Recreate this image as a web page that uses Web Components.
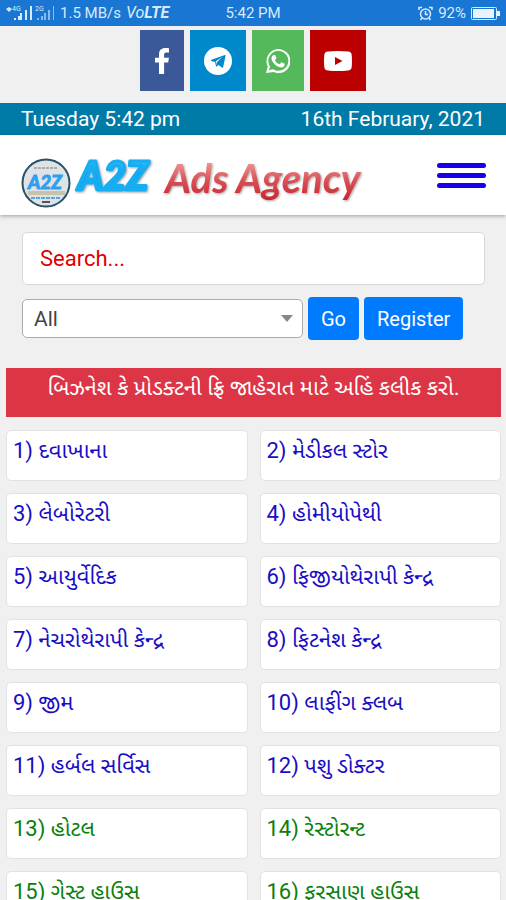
<!DOCTYPE html>
<html lang="gu">
<head>
<meta charset="utf-8">
<meta name="viewport" content="width=device-width, initial-scale=1">
<title>A2Z Ads Agency</title>
<style>
  body { margin: 0; background: #f0f0f0; font-family: Roboto, "Noto Sans Gujarati", "Noto Sans", sans-serif; }
</style>
</head>
<body>
<a2z-app></a2z-app>
<script>
const define = (name, html, setup) => customElements.define(name, class extends HTMLElement {
  connectedCallback() {
    if (this.shadowRoot) return;
    const t = document.createElement('template');
    t.innerHTML = html;
    this.attachShadow({ mode: 'open' }).append(t.content.cloneNode(true));
    if (setup) setup(this, this.shadowRoot);
  }
});

define('status-bar', `
<style>
  :host { display: grid; grid-template-columns: 1fr auto 1fr; align-items: center; height: 26px; padding: 0 6px; background: #1976d2; color: #d8eafc; font-size: 15px; line-height: 26px; }
  .side { display: flex; align-items: center; gap: 5px; }
  .right { justify-content: flex-end; }
  .lte { font-size: 16px; font-style: italic; }
  svg { display: block; flex: none; }
</style>
<div class="side">
  <svg width="49" height="16" viewBox="0 0 49 16" fill="#d8eafc">
    <path d="M0 4l3-2 3 2-3 3z"/>
    <text x="6" y="6" font-size="7">4G</text><text x="29" y="6" font-size="7">2G</text>
    <path d="M8 13h2v2H8zM12 11h2v4h-2zM14 8h2v7h-2zM19 5h2v10h-2zM24 1h2v14h-2z"/>
    <path opacity=".6" d="M31 13h2v2h-2zM35 11h2v4h-2zM38 8h2v7h-2zM42 5h2v10h-2zM47 1h1v14h-1z"/>
  </svg>
  <span>1.5 MB/s</span><span class="lte">Vo<b>LTE</b></span>
</div>
<span>5:42 PM</span>
<div class="side right">
  <svg width="15" height="15" viewBox="0 0 15 15" fill="none" stroke="#d8eafc" stroke-width="1.5"><circle cx="7.500" cy="8" r="5"/><path d="M7.500 5v3.500H10M1 4V1.500h3M14 4V1.500h-3M4 12l-1.500 2M11 12l1.500 2"/></svg>
  <span>92%</span>
  <svg width="29" height="13" viewBox="0 0 29 13"><rect x=".5" y=".5" width="25" height="12" rx="1" fill="none" stroke="#d8eafc"/><path d="M2 2h21v9H2zM26 4h3v5h-3z" fill="#e8f3fd"/></svg>
</div>`);

define('social-link', `
<style>
  :host { display: block; }
  a { display: flex; align-items: center; height: 61px; padding: 0 14px; background: var(--tile); color: #fff; }
  ::slotted(svg) { display: block; }
</style>
<a><slot></slot></a>`, (host, root) => {
  const a = root.querySelector('a');
  a.href = host.getAttribute('href');
  a.setAttribute('aria-label', host.getAttribute('label'));
});

define('social-bar', `
<style>
  :host { display: flex; justify-content: center; gap: 6px; padding: 4px 0 12px; }
</style>
<social-link href="#facebook" label="Facebook" style="--tile:#3b5998"><svg width="16" height="28" viewBox="0 0 16 28" fill="#fff"><path d="M15 1.300v4.200h-2.600c-2 0-2.300 1-2.300 2.300v3h4.800l-.7 4.700h-4.100V27H5V15.500H1v-4.700h4V7.300C5 3.200 7.500 1 11.300 1c1.700 0 3.200.1 3.700.3z"/></svg></social-link>
<social-link href="#telegram" label="Telegram" style="--tile:#0088cc"><svg width="28" height="28" viewBox="0 0 28 28"><circle cx="14" cy="14" r="14" fill="#fff"/><path fill="#0088cc" d="M20.800 8.100c.5-.2.900.1.700.9l-2.300 10.900c-.2.800-.7 1-1.300.6l-3.500-2.600-1.700 1.700c-.3.300-.5.300-.6-.3l-1.300-4.200-3.400-1.100c-.8-.3-.8-.8.200-1.200zM11.600 14.600l.6 3.700.4-2.900 5.500-5.300z"/></svg></social-link>
<social-link href="#whatsapp" label="WhatsApp" style="--tile:#55b95c"><svg width="24" height="26" viewBox="0 0 24 26" fill="#fff"><path fill-rule="evenodd" d="M0 25l1.800-6.400A12 12 0 1 1 7.400 24zM3 22.200l3.800-1 .7.400a10 10 0 1 0-3.800-3.700l.4.700z"/><path d="M8.300 7c.4-.1.800 0 1 .5l1 2.300c.1.300 0 .7-.2 1l-.9 1c-.2.200-.2.400-.1.600 1 1.700 2.300 2.900 4.200 3.700.3.100.5.100.7-.2l1-1.300c.3-.3.5-.3.900-.2l2.300 1.100c.4.200.5.400.5.700-.1 2.200-1.700 3.100-3.300 3.200-2.300 0-5-1.500-6.700-3.200-1.900-1.900-3.200-4.100-3.200-6 0-1.500 1.100-3 2.800-3.200z"/></svg></social-link>
<social-link href="#youtube" label="YouTube" style="--tile:#bb0000"><svg width="28" height="20" viewBox="0 0 28 20"><path fill="#fff" d="M4 .5Q14-.5 24 .5 27.500.8 27.700 4q.5 6 0 12-.3 3.200-3.700 3.500-10 1-20 0Q.600 19.200.300 16q-.6-6 0-12Q.600.800 4 .5z"/><path fill="#b00" d="M11 6l7.500 4-7.500 4z"/></svg></social-link>`);

define('date-bar', `
<style>
  :host { display: flex; justify-content: space-between; height: 32px; padding: 0 21px; background: #007ba7; color: #fff; font-size: 21px; line-height: 32px; }
</style>
<span>Tuesday 5:42 pm</span><span>16th February, 2021</span>`);

define('site-header', `
<style>
  :host { display: flex; align-items: center; justify-content: space-between; height: 80px; padding: 0 20px 0 21px; background: #fff; box-shadow: 0 1px 4px rgba(0,0,0,.35); }
  a, svg { display: block; }
  a { padding-top: 16px; }
  svg { overflow: visible; }
  text { font-style: italic; font-weight: 700; }
  button { display: flex; flex-direction: column; gap: 5px; width: 49px; padding: 0; border: 0; background: none; }
  i { height: 5px; border-radius: 3px; background: #1a00e8; }
</style>
<a href="#home" aria-label="A2Z Ads Agency">
  <svg width="345" height="58" viewBox="0 0 345 58">
    <defs>
      <linearGradient id="blue" x2="0" y2="1"><stop stop-color="#3bc4f8"/><stop offset=".5" stop-color="#16a4ee"/><stop offset="1" stop-color="#07b9f5"/></linearGradient>
      <linearGradient id="red" x2="0" y2="1"><stop offset=".2" stop-color="#ed9090"/><stop offset=".55" stop-color="#d85156"/><stop offset="1" stop-color="#cb202b"/></linearGradient>
      <filter id="lift" x="-10%" y="-10%" width="120%" height="130%"><feDropShadow dx="1" dy="1" stdDeviation="1" flood-color="#555" flood-opacity=".55"/></filter>
    </defs>
    <circle cx="25" cy="29" r="23.500" fill="#dfe3e6" stroke="#285268" stroke-width="2"/>
    <path d="M13 14h23" stroke="#777" stroke-width="1" stroke-dasharray="3 1"/>
    <text x="7" y="35" font-family="Lato" font-size="19" fill="#2f9ff0" stroke="#2f9ff0">A2Z</text>
    <path d="M7 39h37" stroke="#c5c2ad" stroke-width="4"/>
    <path d="M10 44h30" stroke="#5fa4da" stroke-width="2" stroke-dasharray="4 1"/>
    <path d="M21 48h8" stroke="#555" stroke-width="2"/>
    <g filter="url(#lift)">
      <text x="57" y="36" font-family="Lato" font-size="39" style="font-weight:900" fill="url(#blue)" stroke="#19aef1" stroke-width="3" stroke-linejoin="round">A2Z</text>
      <text x="144" y="39" font-family="Lato" font-size="40" fill="url(#red)">Ads Agency</text>
    </g>
  </svg>
</a>
<button type="button" aria-label="Menu"><i></i><i></i><i></i></button>`);

define('search-form', `
<style>
  :host { display: block; padding: 17px 21px 28px 22px; }
  form { display: flex; flex-wrap: wrap; align-items: center; gap: 12px 5px; }
  input, select, button { box-sizing: border-box; margin: 0; font-family: inherit; font-size: 20px; }
  input { flex: 0 0 100%; height: 53px; padding: 0 17px; border: 1px solid #d5d8da; border-radius: 5px; background: #fff; font-size: 22px; }
  input::placeholder { color: #e00000; opacity: 1; }
  .pick { display: flex; align-items: center; flex: 0 0 281px; position: relative; }
  select { appearance: none; width: 100%; height: 39px; padding: 0 11px; border: 1px solid #aaa; border-radius: 5px; background: #fff; color: #444; font-size: 21px; }
  .pick::after { content: ""; position: absolute; right: 10px; border: 6px solid transparent; border-top: 7px solid #888; border-bottom: 0; pointer-events: none; }
  button { height: 43px; padding: 0 13px; border: 0; border-radius: 4px; background: #007bff; color: #fff; }
</style>
<form>
  <input type="search" placeholder="Search..." aria-label="Search">
  <div class="pick"><select aria-label="Category"><option>All</option></select></div>
  <button type="button">Go</button>
  <button type="button">Register</button>
</form>`);

define('promo-banner', `
<style>
  :host { display: block; margin: 0 5px 0 6px; }
  a { display: block; height: 49px; background: #dc3545; color: #fff; font-size: 22px; line-height: 40px; text-align: center; text-decoration: none; white-space: nowrap; }
</style>
<a href="#advertise"><slot></slot></a>`);

define('category-card', `
<style>
  :host { display: block; }
  a { display: block; box-sizing: border-box; height: 51px; padding: 0 6px; border: 1px solid #e2e2e2; border-radius: 5px; background: #fff; color: var(--ink, #1a0dc4); font-size: 22px; line-height: 40px; text-decoration: none; white-space: nowrap; }
</style>
<a href="#category"><slot></slot></a>`);

define('category-list', `
<style>
  :host { display: grid; grid-template-columns: 1fr 1fr; gap: 12px; padding: 13px 5px 12px 6px; }
</style>`, (host, root) => {
  const names = ['દવાખાના', 'મેડીકલ સ્ટોર', 'લેબોરેટરી', 'હોમીયોપેથી', 'આયુર્વેદિક', 'ફિજીયોથેરાપી કેન્દ્ર',
    'નેચરોથેરાપી કેન્દ્ર', 'ફિટનેશ કેન્દ્ર', 'જીમ', 'લાફીંગ ક્લબ', 'હર્બલ સર્વિસ', 'પશુ ડોક્ટર',
    'હોટલ', 'રેસ્ટોરન્ટ', 'ગેસ્ટ હાઉસ', 'ફરસાણ હાઉસ'];
  names.forEach((name, i) => {
    const card = document.createElement('category-card');
    card.textContent = `${i + 1}) ${name}`;
    if (i > 11) card.style.setProperty('--ink', '#0a800a');
    root.append(card);
  });
});

define('a2z-app', `
<style>
  :host { display: flex; flex-direction: column; height: 100vh; }
  main { flex: 1; min-height: 0; overflow-y: auto; scrollbar-width: none; }
</style>
<status-bar></status-bar>
<main>
  <social-bar></social-bar>
  <date-bar></date-bar>
  <site-header></site-header>
  <search-form></search-form>
  <promo-banner>બિઝનેશ કે પ્રોડક્ટની ફ્રિ જાહેરાત માટે અહિં કલીક કરો.</promo-banner>
  <category-list></category-list>
</main>`);
</script>
</body>
</html>
